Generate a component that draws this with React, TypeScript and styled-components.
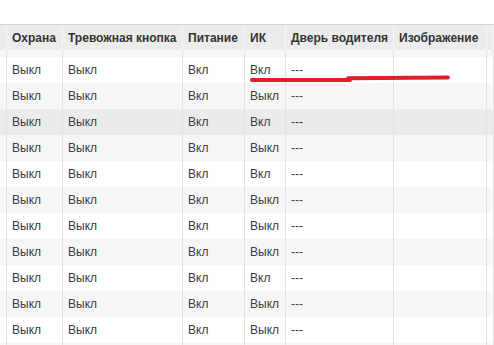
import styled, { createGlobalStyle } from "styled-components";

const Global = createGlobalStyle`
    html, body {
        margin: 0;
        padding: 0;
        background: #ffffff;
        overflow: hidden;
    }
`;

const COLUMNS = "7px 56px 120px 62px 41px 108px 93px 1fr";

type Tone = "white" | "stripe" | "hover";

const Style = {
    Page: styled.div`
        position: relative;
        width: 494px;
        height: 345px;
        padding-top: 24px;
        box-sizing: border-box;
        overflow: hidden;
        font-family: "Liberation Sans", Arial, sans-serif;
        font-size: 12px;
    `,
    Grid: styled.div`
        border-top: 1px solid #d4d4d4;
    `,
    HeadRow: styled.div`
        display: grid;
        grid-template-columns: ${COLUMNS};
        height: 25px;
        background-color: #ececec;
    `,
    HeadCell: styled.div`
        display: flex;
        align-items: center;
        padding-left: 5px;
        border-right: 1px solid #f7f7f7;
        box-sizing: border-box;
        font-weight: bold;
        color: #333333;
        white-space: nowrap;
        overflow: hidden;
    `,
    Row: styled.div<{ $tone: Tone }>`
        display: grid;
        grid-template-columns: ${COLUMNS};
        height: 26px;
        background-color: ${(p) =>
            p.$tone === "hover" ? "#ebebeb" : p.$tone === "stripe" ? "#f6f6f6" : "#ffffff"};
    `,
    Band: styled.div`
        display: grid;
        grid-template-columns: ${COLUMNS};
        height: 7px;
        background-color: #f6f6f6;
    `,
    Cell: styled.div`
        display: flex;
        align-items: center;
        padding-left: 5px;
        border-right: 1px solid #e2e2e2;
        box-sizing: border-box;
        color: #3c3c3c;
        white-space: nowrap;
        overflow: hidden;
    `,
    Mark: styled.svg`
        position: absolute;
        left: 0;
        top: 0;
        pointer-events: none;
    `,
};

const headers = ["", "Охрана", "Тревожная кнопка", "Питание", "ИК", "Дверь водителя", "Изображение", ""];

const ik = ["Вкл", "Выкл", "Вкл", "Выкл", "Вкл", "Выкл", "Выкл", "Выкл", "Вкл", "Выкл", "Выкл"];

const rows = ik.map((v, i) => ({
    guard: "Выкл",
    alarm: "Выкл",
    power: "Вкл",
    ik: v,
    door: "---",
    tone: (i === 2 ? "hover" : i % 2 === 1 ? "stripe" : "white") as Tone,
}));

export default function App() {
    return (
        <>
            <Global />
            <Style.Page>
                <Style.Grid>
                    <Style.HeadRow>
                        {headers.map((h, i) => (
                            <Style.HeadCell key={i}>{h}</Style.HeadCell>
                        ))}
                    </Style.HeadRow>
                    <Style.Band>
                        {headers.map((_, i) => (
                            <Style.Cell key={i} />
                        ))}
                    </Style.Band>
                    {rows.map((r, i) => (
                        <Style.Row key={i} $tone={r.tone}>
                            <Style.Cell />
                            <Style.Cell>{r.guard}</Style.Cell>
                            <Style.Cell>{r.alarm}</Style.Cell>
                            <Style.Cell>{r.power}</Style.Cell>
                            <Style.Cell>{r.ik}</Style.Cell>
                            <Style.Cell>{r.door}</Style.Cell>
                            <Style.Cell />
                            <Style.Cell />
                        </Style.Row>
                    ))}
                    {/* next row only peeks in at the bottom edge */}
                    <Style.Row $tone="stripe">
                        {headers.map((_, i) => (
                            <Style.Cell key={i} />
                        ))}
                    </Style.Row>
                </Style.Grid>
                {/* red underline drawn over the first row */}
                <Style.Mark width="494" height="345">
                    <line x1="252" y1="80" x2="350" y2="80" stroke="#e11f2b" strokeWidth="4" strokeLinecap="round" />
                    <line x1="348" y1="78.2" x2="448" y2="77.6" stroke="#e11f2b" strokeWidth="4" strokeLinecap="round" />
                </Style.Mark>
            </Style.Page>
        </>
    );
}
